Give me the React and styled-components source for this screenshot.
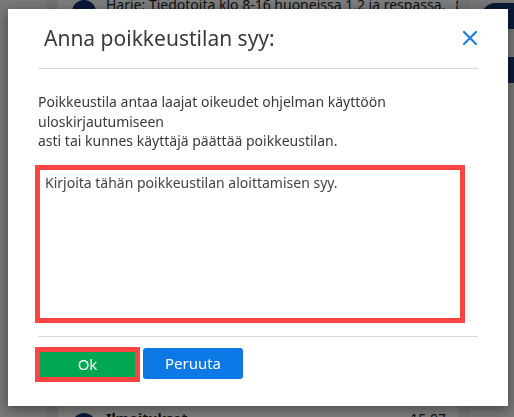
import React from "react";
import styled, { createGlobalStyle } from "styled-components";

const GlobalStyle = createGlobalStyle`
  html, body {
    margin: 0;
    padding: 0;
    background: #f2f2f2;
    font-family: "Noto Sans", "Open Sans", sans-serif;
  }
`;

const Page = styled.div`
  display: flex;
  height: 417px;
  overflow: hidden;
  background: #f2f2f2;
`;

const SideGap = styled.div`
  width: ${(p) => p.w}px;
  background: ${(p) => p.bg};
  flex-shrink: 0;
`;

const ListPanel = styled.div`
  width: 400px;
  flex-shrink: 0;
  background: #fbfbfb;
  display: flex;
  flex-direction: column;
  justify-content: space-between;
`;

const ListRow = styled.div`
  display: flex;
  align-items: ${(p) => (p.top ? "flex-end" : "flex-start")};
  gap: 10px;
  height: ${(p) => (p.top ? 14 : 8)}px;
  padding: ${(p) => (p.top ? "0 12px 0 14px" : "2px 12px 0 14px")};
  overflow: hidden;
  font-size: 14px;
  color: #222;
`;

const Avatar = styled.div`
  width: 24px;
  height: 24px;
  border-radius: 50%;
  background: #12336e;
  flex-shrink: 0;
  align-self: ${(p) => (p.top ? "flex-end" : "flex-start")};
  margin-bottom: ${(p) => (p.top ? "-10px" : "0")};
  margin-top: ${(p) => (p.top ? "0" : "4px")};
`;

const RowText = styled.span`
  flex: 1;
  white-space: nowrap;
  font-weight: ${(p) => (p.bold ? 700 : 400)};
`;

const RightRail = styled.div`
  flex: 1;
  display: flex;
  flex-direction: column;
  align-items: flex-end;
  gap: 28px;
  padding-top: 3px;
  background: #eeeeee;
`;

const Bubble = styled.div`
  width: 32px;
  height: 26px;
  border-radius: 13px 0 0 13px;
  background: #12336e;
`;

const Overlay = styled.div`
  position: fixed;
  inset: 0;
  background: rgba(0, 0, 0, 0.5);
  display: flex;
  justify-content: flex-start;
  align-items: flex-start;
  padding: 9px 0 0 8px;
`;

const Modal = styled.div`
  width: 500px;
  height: 397px;
  background: #fff;
  box-shadow: 0 3px 12px rgba(0, 0, 0, 0.45);
  display: flex;
  flex-direction: column;
  box-sizing: border-box;
`;

const Header = styled.div`
  margin: 0 30px;
  height: 60px;
  box-sizing: border-box;
  display: flex;
  align-items: center;
  justify-content: space-between;
  padding: 0 0 2px 6px;
  border-bottom: 1px solid #d5d9df;
`;

const Title = styled.h2`
  margin: 0;
  font-size: 21px;
  font-weight: 400;
  color: #3a3a3a;
`;

const CloseButton = styled.button`
  border: none;
  background: transparent;
  padding: 0;
  width: 16px;
  height: 16px;
  display: flex;
  cursor: pointer;
`;

const Body = styled.div`
  padding: 23px 30px 0 30px;
  display: flex;
  flex-direction: column;
`;

const Info = styled.p`
  margin: 0;
  font-size: 14px;
  line-height: 19.5px;
  color: #3a3a3a;
`;

const Reason = styled.textarea`
  margin: 14px 0 0 -3px;
  width: 430px;
  height: 158px;
  box-sizing: border-box;
  border: 5px solid #fd4444;
  outline: none;
  resize: none;
  padding: 3px 5px;
  font-family: inherit;
  font-size: 14px;
  color: #444;

  &::placeholder {
    color: #444;
    opacity: 1;
  }
`;

const Footer = styled.div`
  margin: 13px 30px 0;
  padding-top: 10px;
  border-top: 1px solid #d5d9df;
  display: flex;
  gap: 3px;
`;

const Button = styled.button`
  height: ${(p) => (p.outlined ? 35 : 31)}px;
  width: ${(p) => (p.outlined ? 105 : 100)}px;
  margin: ${(p) => (p.outlined ? "0 0 0 -3px" : "1px 0 0")};
  box-sizing: border-box;
  border: ${(p) => (p.outlined ? "5px solid #fd4444" : "none")};
  border-radius: ${(p) => (p.outlined ? 0 : 3)}px;
  background: ${(p) => p.bg};
  color: #fff;
  font-family: inherit;
  font-size: 15px;
  cursor: pointer;
`;

export default function App() {
  return (
    <>
      <GlobalStyle />
      <Page>
        <SideGap w={46} bg="#f0f0f0" />
        <SideGap w={12} bg="#dfe4ea" />
        <ListPanel>
          <ListRow top>
            <Avatar top />
            <RowText>Harie: Tiedotoita klo 8-16 huoneissa 1,2 ja respassa.</RowText>
            <span>8.2.2021</span>
          </ListRow>
          <ListRow>
            <Avatar />
            <RowText bold>Ilmoitukset</RowText>
            <span>15.07</span>
          </ListRow>
        </ListPanel>
        <SideGap w={12} bg="#e2e6ea" />
        <RightRail>
          <Bubble />
          <Bubble />
        </RightRail>
      </Page>
      <Overlay>
        <Modal>
          <Header>
            <Title>Anna poikkeustilan syy:</Title>
            <CloseButton aria-label="Sulje">
              <svg width="16" height="16" viewBox="0 0 16 16">
                <path d="M2 2 L14 14 M14 2 L2 14" stroke="#1a7de3" strokeWidth="2.2" strokeLinecap="round" />
              </svg>
            </CloseButton>
          </Header>
          <Body>
            <Info>
              Poikkeustila antaa laajat oikeudet ohjelman käyttöön uloskirjautumiseen
              <br />
              asti tai kunnes käyttäjä päättää poikkeustilan.
            </Info>
            <Reason placeholder="Kirjoita tähän poikkeustilan aloittamisen syy." />
          </Body>
          <Footer>
            <Button outlined bg="#02a851">Ok</Button>
            <Button bg="#0b78e6">Peruuta</Button>
          </Footer>
        </Modal>
      </Overlay>
    </>
  );
}
